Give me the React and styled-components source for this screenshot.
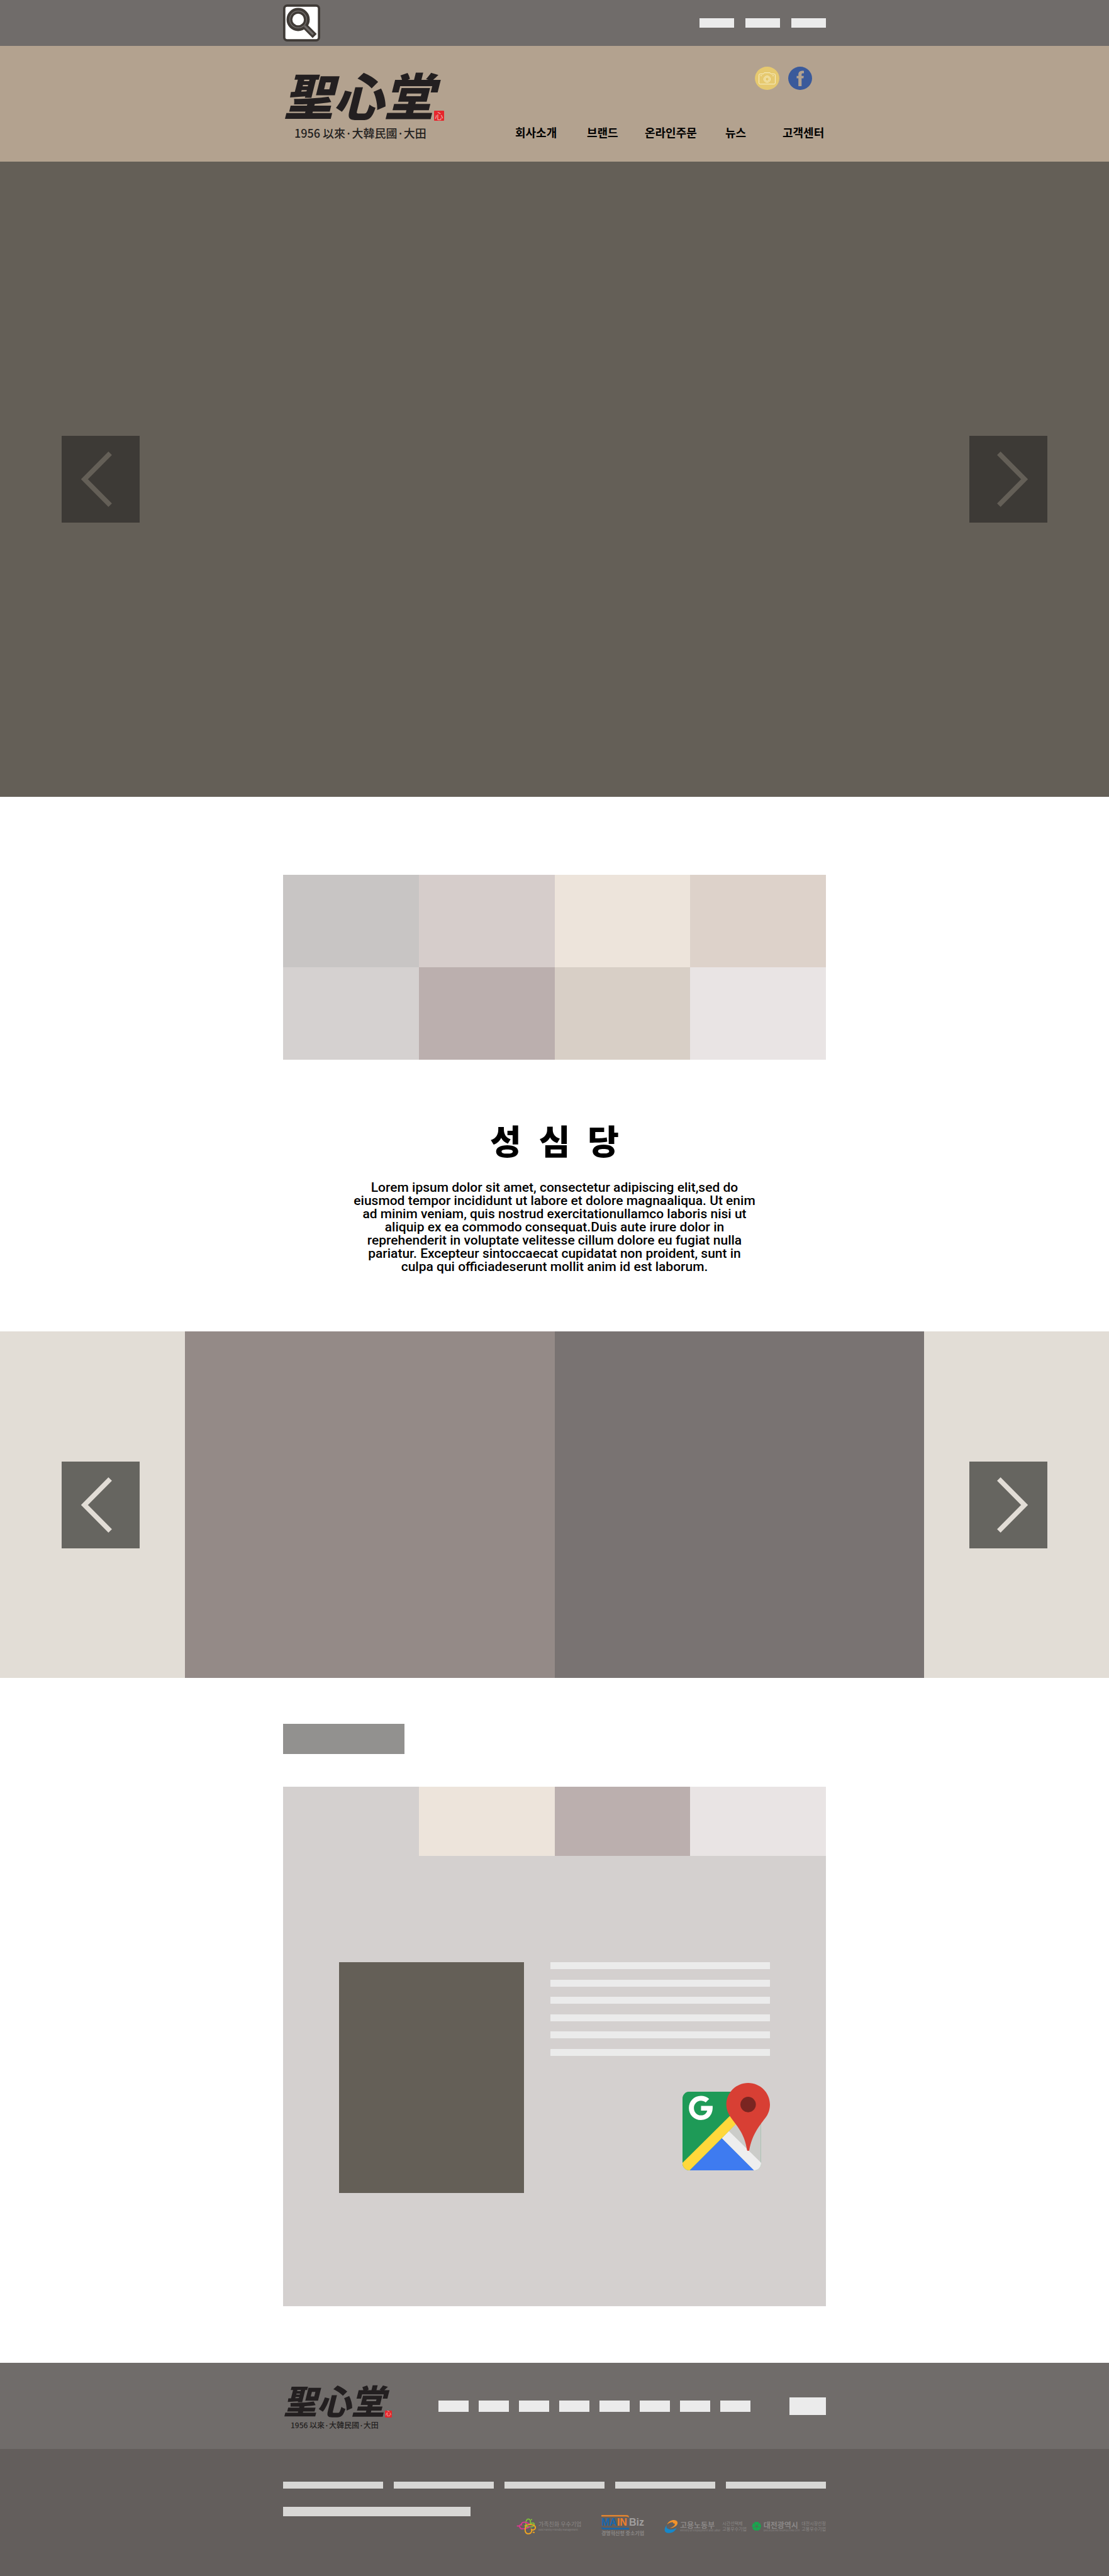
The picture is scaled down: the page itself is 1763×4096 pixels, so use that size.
import React from "react";
import styled, { createGlobalStyle } from "styled-components";

const GlobalStyle = createGlobalStyle`
  *, *::before, *::after { box-sizing: border-box; }
  html, body { margin: 0; padding: 0; background: #ffffff; }
  body { font-family: "Noto Sans CJK KR", "Liberation Sans", sans-serif; color: #000000; }
  a { color: inherit; text-decoration: none; }
  h1, h2, p, ul { margin: 0; padding: 0; }
  ul { list-style: none; }
  button { border: 0; padding: 0; background: none; cursor: pointer; }
  svg { display: block; }
`;

const Page = styled.div`
  display: flex;
  flex-direction: column;
`;

const Container = styled.div`
  width: 100%;
  max-width: 863px;
  margin: 0 auto;
`;

/* Top utility bar */
const TopBar = styled.div`
  background: #706c6a;
  height: 73px;
`;

const TopBarInner = styled(Container)`
  height: 100%;
  display: flex;
  align-items: center;
  justify-content: space-between;
`;

const SearchButton = styled.button`
  width: 59px;
  height: 59px;
`;

const LinkRow = styled.nav`
  display: flex;
  align-items: center;
  gap: ${(p) => p.$gap}px;
  padding-left: 12px;
`;

const BlankLink = styled.a`
  display: block;
  width: ${(p) => p.$width}px;
  height: ${(p) => p.$height}px;
  background: #ebebeb;
`;

/* Header */
const Header = styled.header`
  background: #b3a28f;
  height: 184px;
`;

const HeaderInner = styled(Container)`
  display: flex;
  justify-content: space-between;
  padding-top: 33px;
`;

const LogoLink = styled.a`
  display: flex;
  flex-direction: column;
  gap: ${(p) => (p.$small ? 4 : 8)}px;
  color: #231f20;
`;

const LogoMark = styled.span`
  display: flex;
  align-items: flex-end;
  font-size: ${(p) => (p.$small ? 54 : 80)}px;
  line-height: ${(p) => (p.$small ? 56 : 86)}px;
  font-weight: 900;
  font-style: italic;
`;

const Seal = styled.span`
  width: ${(p) => (p.$small ? 11 : 16)}px;
  height: ${(p) => (p.$small ? 11 : 16)}px;
  border-radius: 1px;
  background: #e6262c;
  color: #f3b8b0;
  font-size: ${(p) => (p.$small ? 9 : 13)}px;
  line-height: ${(p) => (p.$small ? 10 : 15)}px;
  font-weight: 400;
  font-style: normal;
  text-align: center;
`;

const LogoCaption = styled.span`
  padding-left: ${(p) => (p.$small ? 12 : 18)}px;
  font-size: ${(p) => (p.$small ? 12 : 18)}px;
  line-height: ${(p) => (p.$small ? 16 : 22)}px;
  font-weight: 500;
  white-space: nowrap;
`;

const HeaderSide = styled.div`
  display: flex;
  flex-direction: column;
  gap: 54px;
`;

const Social = styled.div`
  display: flex;
  justify-content: flex-end;
  gap: 14px;
  padding-right: 22px;
`;

const MainNav = styled.ul`
  display: grid;
  grid-template-columns: 114px 92px 128px 91px 69px;
  font-size: 18px;
  line-height: 26px;
  font-weight: 700;
  white-space: nowrap;
`;

/* Carousels */
const Hero = styled.section`
  height: 1010px;
  padding: 0 98px;
  background: #645f57;
  display: flex;
  align-items: center;
  justify-content: space-between;
`;

const ArrowButton = styled.button`
  width: 124px;
  height: 138px;
  background: ${(p) => p.$bg};
  color: ${(p) => p.$fg};
`;

const Slides = styled.section`
  position: relative;
  height: 551px;
  display: grid;
  grid-template-columns: 1fr 2fr 2fr 1fr;
`;

const Slide = styled.div`
  background: ${(p) => p.$color};
`;

const SlideControls = styled.div`
  position: absolute;
  inset: 0;
  padding: 0 98px;
  display: flex;
  align-items: center;
  justify-content: space-between;
`;

/* Product tiles */
const Tiles = styled(Container)`
  margin-top: 124px;
  display: grid;
  grid-template-columns: repeat(4, 1fr);
  grid-auto-rows: 147px;
`;

const Tile = styled.a`
  background: ${(p) => p.$color};
`;

/* Introduction */
const Intro = styled.section`
  padding: 92px 24px;
  text-align: center;
`;

const Title = styled.h1`
  display: flex;
  justify-content: center;
  gap: 28px;
  font-size: 54px;
  line-height: 72px;
  font-weight: 900;
`;

const Lorem = styled.p`
  padding-top: 29px;
  font-family: Roboto, "Liberation Sans", sans-serif;
  font-size: 21px;
  line-height: 21px;
  font-weight: 500;
`;

/* Store information */
const Store = styled(Container)`
  padding: 73px 0 90px;
`;

const StoreLabel = styled.div`
  width: 193px;
  height: 48px;
  margin-bottom: 52px;
  background: #92918f;
`;

const StorePanel = styled.section`
  background: #d4d0cf;
`;

const Tabs = styled.div`
  display: grid;
  grid-template-columns: repeat(4, 1fr);
`;

const Tab = styled.button`
  height: 110px;
  background: ${(p) => p.$color};
`;

const StoreBody = styled.div`
  display: flex;
  gap: 42px;
  padding: 169px 89px 180px;
`;

const Photo = styled.div`
  flex: 0 0 294px;
  height: 367px;
  background: #645f57;
`;

const StoreDetails = styled.div`
  flex: 1;
  display: flex;
  flex-direction: column;
  align-items: flex-end;
  gap: 43px;
`;

const Lines = styled.div`
  width: 100%;
  height: 149px;
  display: flex;
  flex-direction: column;
  justify-content: space-between;
`;

const Line = styled.div`
  height: 11px;
  background: #ebebeb;
`;

/* Footer */
const FooterTop = styled.div`
  background: #706c6a;
`;

const FooterTopInner = styled(Container)`
  height: 137px;
  display: flex;
  align-items: center;
  justify-content: space-between;
`;

const FooterBottom = styled.div`
  background: #635e5c;
  min-height: 203px;
  padding-top: 52px;
`;

const Info = styled.div`
  display: flex;
  gap: 17px;
  margin-bottom: 29px;
`;

const InfoBar = styled.div`
  flex: 1;
  height: 11px;
  background: #d8d7d5;
`;

const FooterLast = styled.div`
  display: flex;
  align-items: flex-start;
  justify-content: space-between;
`;

const AddressBar = styled.div`
  width: 298px;
  height: 15px;
  background: #d8d7d5;
`;

const Badges = styled.div`
  display: grid;
  grid-template-columns: 135px 100px 139px 118px;
  align-items: center;
  padding-top: 13px;
  color: #8b8887;
`;

const Badge = styled.div`
  display: flex;
  align-items: center;
  gap: 3px;
`;

const Stack = styled.div`
  display: flex;
  flex-direction: column;
  white-space: nowrap;
`;

const BadgeText = styled.span`
  font-size: ${(p) => p.$size}px;
  line-height: ${(p) => p.$line}px;
  font-weight: ${(p) => (p.$bold ? 700 : 400)};
`;

const MainBiz = styled.span`
  display: flex;
  align-items: baseline;
  gap: 3px;
  font-family: "Liberation Sans", sans-serif;
  font-size: 16px;
  line-height: 15px;
  font-weight: 700;
`;

const Ink = styled.span`
  color: ${(p) => p.$color};
`;

function SearchIcon() {
  return (
    <svg width="59" height="59" viewBox="0 0 64 64" aria-hidden="true">
      <rect x="2" y="2" width="60" height="60" rx="5" fill="#ffffff" stroke="#3f3a36" strokeWidth="4" />
      <path d="M37 37 L54.5 54.5" stroke="#3f3a36" strokeWidth="10" />
      <circle cx="26" cy="26" r="15" fill="#ffffff" stroke="#3f3a36" strokeWidth="10" />
      <circle cx="26" cy="26" r="14.5" fill="none" stroke="#706c6a" strokeWidth="1.6" />
      <path d="M37 37 L52 52" stroke="#706c6a" strokeWidth="3.5" />
    </svg>
  );
}

function CameraIcon() {
  return (
    <svg width="39" height="37" viewBox="0 0 42 40" aria-hidden="true">
      <ellipse cx="21" cy="20" rx="21" ry="20" fill="#e6c96f" />
      <g fill="none" stroke="#fbf3cf" strokeWidth="1">
        <path d="M9 12.500H14.500L16 10.500H26L27.500 12.500H33Q35 12.500 35 14.500V28Q35 30 33 30H9Q7 30 7 28V14.500Q7 12.500 9 12.500Z" />
        <circle cx="21" cy="21.500" r="5.500" />
        <circle cx="21" cy="21.500" r="3.500" />
        <path d="M9.500 15.500H12M30 15.500H32.500" />
      </g>
    </svg>
  );
}

function FacebookIcon() {
  return (
    <svg width="38" height="37" viewBox="0 0 41 40" aria-hidden="true">
      <ellipse cx="20.500" cy="20" rx="20.500" ry="20" fill="#3a5a9b" />
      <path d="M27 11.500V7.300C22 6 17.500 8.300 17.500 13V16H14.500V20H17.500V33.500H23V20H26.200L26.800 16H23V13.500C23 11.600 24.500 11 27 11.500Z" fill="#b3a28f" />
    </svg>
  );
}

function Chevron({ right }) {
  return (
    <svg width="124" height="138" viewBox="0 0 135 150" aria-hidden="true">
      <path
        d={right ? "M51 30L95.500 75L51 120" : "M84 30L39.500 75L84 120"}
        fill="none"
        stroke="currentColor"
        strokeWidth="8.500"
      />
    </svg>
  );
}

function MapIcon() {
  return (
    <svg width="139" height="139" viewBox="126 78 453 453" role="img" aria-label="Google Maps">
      <defs>
        <clipPath id="map-sheet">
          <rect x="126" y="123" width="407" height="408" rx="36" />
        </clipPath>
      </defs>
      <g clipPath="url(#map-sheet)">
        <rect x="126" y="123" width="407" height="408" fill="#1e9a57" />
        <path d="M533 160V531H330V364L440 250Z" fill="#cbccc9" />
        <path d="M330 364L497 531H163Z" fill="#3e7bf0" />
        <path d="M330 364L366 327L540 498V531H497Z" fill="#eeeeee" />
        <path d="M118 500L372 248L408 286L163 531H118Z" fill="#ffd83b" />
      </g>
      <path d="M222 197H282C285 242 260 270 221 270C186 270 159 243 159 208C159 173 186 145 221 145C238 145 253 151 264 161L246 179C239 173 231 170 221 170C201 170 185 187 185 208C185 229 201 246 221 246C238 246 250 237 254 221H222Z" fill="#ffffff" />
      <path d="M466 78C528 78 579 128 579 190C579 216 570 240 555 260C520 306 488 345 472 425Q471 430 466 430Q461 430 460 425C449 345 412 305 380 262C363 240 353 217 353 190C353 128 404 78 466 78Z" fill="#d83f34" />
      <circle cx="466" cy="190" r="40" fill="#7a2521" />
    </svg>
  );
}

function FamilyIcon() {
  return (
    <svg width="32" height="27" viewBox="0 0 104 88" fill="none" strokeWidth="6" aria-hidden="true">
      <path d="M62 52C42 50 46 6 62 8C76 10 74 30 70 34C86 22 96 30 90 42C84 50 70 50 50 46" stroke="#7fbf3b" />
      <path d="M80 8L76 14" stroke="#7fbf3b" />
      <path d="M70 38C50 18 22 22 26 38C10 34 14 62 34 58C48 58 62 54 72 46M2 44H14" stroke="#d9388e" />
      <path d="M42 44C66 30 100 36 98 54C96 66 84 66 78 62C82 78 70 86 58 84C44 82 42 64 48 46M84 76L94 78" stroke="#f3a61f" />
    </svg>
  );
}

function LaborIcon() {
  return (
    <svg width="22" height="22" viewBox="0 0 70 70" aria-hidden="true">
      <path d="M14 26C24 2 58-4 66 12C72 26 56 42 28 44C52 36 58 26 50 18C42 10 24 16 14 26Z" fill="#f3932a" />
      <circle cx="50" cy="15" r="6" fill="#f3932a" />
      <path d="M14 28C-2 44-4 66 20 69C44 70 58 56 62 42C50 54 20 54 12 42Q10 36 14 28Z" fill="#1787c9" />
    </svg>
  );
}

function DaejeonIcon() {
  return (
    <svg width="18" height="18" viewBox="-30 -30 60 60" aria-hidden="true">
      {[0, 72, 144, 216, 288].map((turn) => (
        <path
          key={turn}
          transform={`rotate(${turn})`}
          d="M0-3L-14-20C-12-28-4-30 0-24C4-30 12-28 14-20Z"
          fill="#16a84e"
        />
      ))}
    </svg>
  );
}

function Logo({ small }) {
  return (
    <LogoLink href="#" $small={small}>
      <LogoMark $small={small}>
        聖心堂<Seal $small={small}>心</Seal>
      </LogoMark>
      <LogoCaption $small={small}>1956 以來·大韓民國·大田</LogoCaption>
    </LogoLink>
  );
}

const topLinks = ["로그인", "회원가입", "장바구니"];
const menu = ["회사소개", "브랜드", "온라인주문", "뉴스", "고객센터"];
const tiles = ["#c8c5c4", "#d6cdcb", "#ede4db", "#ddd2ca", "#d5d1d0", "#bbafae", "#d8cfc6", "#e9e4e4"];
const slides = ["#e2ddd6", "#948a87", "#797372", "#e2ddd6"];
const tabs = ["#d4d0cf", "#ede4db", "#bbafae", "#e9e4e4"];
const footerLinks = [1, 2, 3, 4, 5, 6, 7, 8];
const copy = [
  "Lorem ipsum dolor sit amet, consectetur adipiscing elit,sed do",
  "eiusmod tempor incididunt ut labore et dolore magnaaliqua. Ut enim",
  "ad minim veniam, quis nostrud exercitationullamco laboris nisi ut",
  "aliquip ex ea commodo consequat.Duis aute irure dolor in",
  "reprehenderit in voluptate velitesse cillum dolore eu fugiat nulla",
  "pariatur. Excepteur sintoccaecat cupidatat non proident, sunt in",
  "culpa qui officiadeserunt mollit anim id est laborum.",
];

export default function App() {
  return (
    <Page>
      <GlobalStyle />
      <TopBar>
        <TopBarInner>
          <SearchButton type="button" aria-label="검색">
            <SearchIcon />
          </SearchButton>
          <LinkRow $gap={18}>
            {topLinks.map((name) => (
              <BlankLink key={name} href="#" aria-label={name} $width={55} $height={15} />
            ))}
          </LinkRow>
        </TopBarInner>
      </TopBar>

      <Header>
        <HeaderInner>
          <Logo />
          <HeaderSide>
            <Social>
              <a href="#" aria-label="사진"><CameraIcon /></a>
              <a href="#" aria-label="페이스북"><FacebookIcon /></a>
            </Social>
            <MainNav>
              {menu.map((item) => (
                <li key={item}><a href="#">{item}</a></li>
              ))}
            </MainNav>
          </HeaderSide>
        </HeaderInner>
      </Header>

      <Hero>
        <ArrowButton type="button" aria-label="이전" $bg="#3d3a36" $fg="#645f57"><Chevron /></ArrowButton>
        <ArrowButton type="button" aria-label="다음" $bg="#3d3a36" $fg="#645f57"><Chevron right /></ArrowButton>
      </Hero>

      <Tiles>
        {tiles.map((color, i) => (
          <Tile key={i} href="#" aria-label={`제품 ${i + 1}`} $color={color} />
        ))}
      </Tiles>

      <Intro>
        <Title><span>성</span><span>심</span><span>당</span></Title>
        <Lorem>
          {copy.map((line) => (
            <React.Fragment key={line}>{line}<br /></React.Fragment>
          ))}
        </Lorem>
      </Intro>

      <Slides>
        {slides.map((color, i) => (
          <Slide key={i} $color={color} />
        ))}
        <SlideControls>
          <ArrowButton type="button" aria-label="이전" $bg="#666560" $fg="#e2ddd6"><Chevron /></ArrowButton>
          <ArrowButton type="button" aria-label="다음" $bg="#666560" $fg="#e2ddd6"><Chevron right /></ArrowButton>
        </SlideControls>
      </Slides>

      <Store>
        <StoreLabel />
        <StorePanel>
          <Tabs>
            {tabs.map((color, i) => (
              <Tab key={i} type="button" aria-label={`매장 ${i + 1}`} $color={color} />
            ))}
          </Tabs>
          <StoreBody>
            <Photo />
            <StoreDetails>
              <Lines>
                {[1, 2, 3, 4, 5, 6].map((n) => <Line key={n} />)}
              </Lines>
              <MapIcon />
            </StoreDetails>
          </StoreBody>
        </StorePanel>
      </Store>

      <footer>
        <FooterTop>
          <FooterTopInner>
            <Logo small />
            <LinkRow $gap={16}>
              {footerLinks.map((n) => (
                <BlankLink key={n} href="#" aria-label={`메뉴 ${n}`} $width={48} $height={18} />
              ))}
            </LinkRow>
            <BlankLink href="#" aria-label="관련 사이트" $width={58} $height={28} />
          </FooterTopInner>
        </FooterTop>
        <FooterBottom>
          <Container>
            <Info>
              {[1, 2, 3, 4, 5].map((n) => <InfoBar key={n} />)}
            </Info>
            <FooterLast>
              <AddressBar />
              <Badges>
                <Badge>
                  <FamilyIcon />
                  <Stack>
                    <BadgeText $size={9} $line={11}>가족친화 우수기업</BadgeText>
                    <BadgeText $size={4} $line={6}>Best Family Friendly Management</BadgeText>
                  </Stack>
                </Badge>
                <Stack>
                  <svg width="44" height="4" viewBox="0 0 44 4" aria-hidden="true">
                    <path d="M0 0H40Q44 0 44 4Q42 2.500 39 2.500H0Z" fill="#e08431" />
                  </svg>
                  <MainBiz>
                    <span><Ink $color="#1667ae">MA</Ink><Ink $color="#ee7f2d">IN</Ink></span>
                    <Ink $color="#a09e9e">Biz</Ink>
                  </MainBiz>
                  <svg width="44" height="4" viewBox="0 0 44 4" aria-hidden="true">
                    <path d="M0 0Q2 1.500 5 1.500H44V4H4Q0 4 0 0Z" fill="#1667ae" />
                  </svg>
                  <BadgeText $size={8} $line={12} $bold>경영혁신형 중소기업</BadgeText>
                </Stack>
                <Badge>
                  <LaborIcon />
                  <Stack>
                    <BadgeText $size={12} $line={13} $bold>고용노동부</BadgeText>
                    <BadgeText $size={4} $line={5}>Ministry of Employment and Labor</BadgeText>
                  </Stack>
                  <Stack>
                    <BadgeText $size={7} $line={9}>시간선택제</BadgeText>
                    <BadgeText $size={7} $line={9}>고용우수기업</BadgeText>
                  </Stack>
                </Badge>
                <Badge>
                  <DaejeonIcon />
                  <Stack>
                    <BadgeText $size={12} $line={13} $bold>대전광역시</BadgeText>
                    <BadgeText $size={4} $line={5}>DAEJEON METROPOLITAN CITY</BadgeText>
                  </Stack>
                  <Stack>
                    <BadgeText $size={7} $line={9}>대전시장선정</BadgeText>
                    <BadgeText $size={7} $line={9}>고용우수기업</BadgeText>
                  </Stack>
                </Badge>
              </Badges>
            </FooterLast>
          </Container>
        </FooterBottom>
      </footer>
    </Page>
  );
}
